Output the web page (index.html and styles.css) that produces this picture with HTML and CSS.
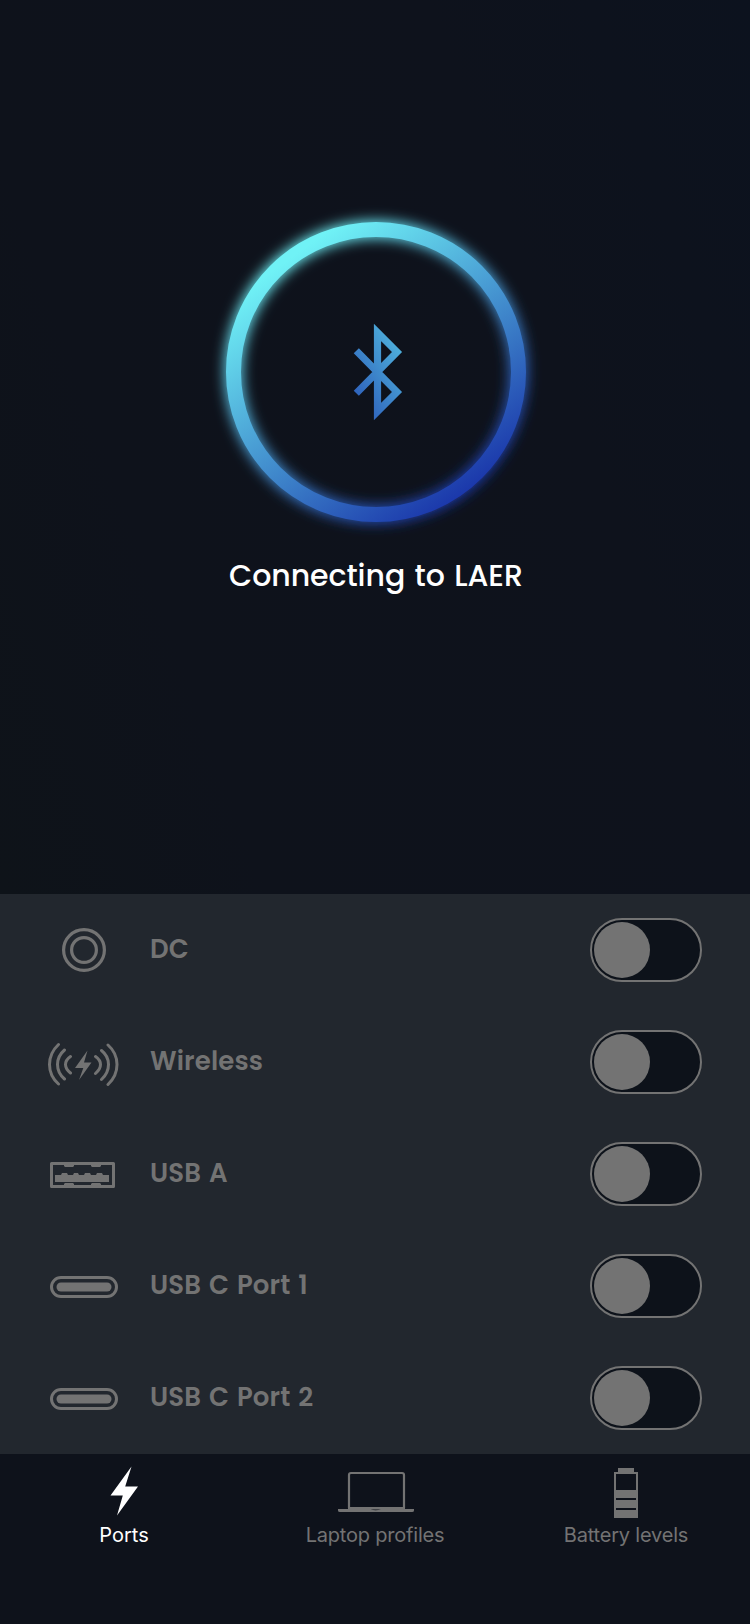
FILE: index.html
```html
<!DOCTYPE html>
<html lang="en">
<head>
<meta charset="utf-8">
<title>LAER</title>
<link rel="stylesheet" href="styles.css">
</head>
<body>
<main class="app">
  <section class="hero">
    <svg class="ring" width="350" height="350" viewBox="200 197 350 350">
      <defs>
        <linearGradient id="ringFill" gradientUnits="userSpaceOnUse" x1="293" y1="256" x2="463" y2="494">
          <stop offset="0" stop-color="#70f2f6"/><stop offset="1" stop-color="#1b38ab"/>
        </linearGradient>
        <linearGradient id="btFill" gradientUnits="userSpaceOnUse" x1="407" y1="350" x2="350" y2="384">
          <stop offset="0" stop-color="#50b4dd"/><stop offset="1" stop-color="#2f64bd"/>
        </linearGradient>
        <filter id="glow" x="-20%" y="-20%" width="140%" height="140%"><feGaussianBlur stdDeviation="6.500"/></filter>
      </defs>
      <circle cx="376" cy="372" r="142.500" fill="none" stroke="url(#ringFill)" stroke-width="18" filter="url(#glow)"/>
      <circle cx="376" cy="372" r="142.500" fill="none" stroke="url(#ringFill)" stroke-width="15"/>
      <path d="M356.300 350.800 397 392 377.500 411.500V332.500L397 352 356.300 393.200" fill="none" stroke="url(#btFill)" stroke-width="7.200" stroke-miterlimit="5"/>
    </svg>
    <h1 class="status">Connecting to LAER</h1>
  </section>

  <section class="ports">
    <div class="port">
      <svg class="port-icon" width="72" height="48" viewBox="0 0 72 48" fill="none" stroke="currentColor" stroke-width="3.200">
        <circle cx="36" cy="24" r="20.400"/><circle cx="36" cy="24" r="12.400"/>
      </svg>
      <span class="label">DC</span><span class="toggle"><i class="knob"></i></span>
    </div>
    <div class="port">
      <svg class="port-icon" width="72" height="48" viewBox="0 0 72 48" fill="none" stroke="currentColor" stroke-width="3" stroke-linecap="round">
        <path d="M10.500 6.500Q1.500 15 1.500 26.500T10.500 46M16.500 12Q9.500 18 9.500 26.500T16.500 41M22.500 18.500Q17.500 22 17.500 26.500T22.500 35M60 7Q69 15 69 26.500T60 46.500M53.500 12.500Q60.500 18 60.500 26.500T53.500 41.500M47.500 18.500Q52.500 22 52.500 26.500T47.500 35.500"/>
        <path d="M39.500 12.500 27 30h8.300L31 42 43.500 24.500h-7.500z" fill="currentColor" stroke="none"/>
      </svg>
      <span class="label">Wireless</span><span class="toggle"><i class="knob"></i></span>
    </div>
    <div class="port">
      <svg class="port-icon" width="72" height="48" viewBox="0 0 72 48">
        <path d="M3.500 13.500h62v23h-62z" fill="none" stroke="currentColor" stroke-width="3" stroke-linejoin="round"/>
        <path d="M16 14h10v2l-1 1h-8l-1-1zM43 14h10v2l-1 1h-8l-1-1zM16 36h10v-2l-1-1h-8l-1 1zM43 36h10v-2l-1-1h-8l-1 1zM7 25h6l1-2h5l1 2h5l1-2h4l1 2h5l1-2h5l1 2h5l1-2h5l1 2h6v7H7z" fill="currentColor"/>
      </svg>
      <span class="label">USB A</span><span class="toggle"><i class="knob"></i></span>
    </div>
    <div class="port">
      <svg class="port-icon" width="72" height="48" viewBox="0 0 72 48">
        <rect x="3.500" y="15.500" width="65" height="19" rx="9.500" fill="none" stroke="currentColor" stroke-width="3"/>
        <rect x="8.500" y="20.500" width="55" height="9" rx="4.500" fill="currentColor"/>
      </svg>
      <span class="label">USB C Port 1</span><span class="toggle"><i class="knob"></i></span>
    </div>
    <div class="port">
      <svg class="port-icon" width="72" height="48" viewBox="0 0 72 48">
        <rect x="3.500" y="15.500" width="65" height="19" rx="9.500" fill="none" stroke="currentColor" stroke-width="3"/>
        <rect x="8.500" y="20.500" width="55" height="9" rx="4.500" fill="currentColor"/>
      </svg>
      <span class="label">USB C Port 2</span><span class="toggle"><i class="knob"></i></span>
    </div>
  </section>

  <nav class="tabs">
    <a class="tab active">
      <svg width="80" height="56" viewBox="0 0 80 56"><path d="M47.500 2.500 26.500 31.500h12.300L33 51.500 54 22.500H41.200z" fill="currentColor"/></svg>
      <span class="tab-text">Ports</span>
    </a>
    <a class="tab">
      <svg width="80" height="56" viewBox="0 0 80 56">
        <path d="M14 44V11q0-2 2-2H67q2 0 2 2V44" fill="none" stroke="currentColor" stroke-width="2.200"/>
        <path d="M3 45h10v-2H70v2h9v1.500q0 1.500-2 1.500H5q-2 0-2-1.500zM35.500 45.500q5 1.500 10.500 0z" fill="currentColor" fill-rule="evenodd"/>
      </svg>
      <span class="tab-text tight">Laptop profiles</span>
    </a>
    <a class="tab">
      <svg width="80" height="56" viewBox="0 0 80 56"><path d="M32 4h16v4h4v46H28V8h4zM30 10v16h20V10zM30 34v2h20v-2zM30 44v2h20v-2z" fill="currentColor" fill-rule="evenodd"/></svg>
      <span class="tab-text tight">Battery levels</span>
    </a>
  </nav>
</main>
</body>
</html>
```
FILE: styles.css
```css
body {
  margin: 0;
  background: #0e121b;
  font-family: Poppins, Inter, "Open Sans", sans-serif;
}
.app {
  display: flex;
  flex-direction: column;
  height: 1624px;
  background: #0e121b;
}
.hero {
  box-sizing: border-box;
  height: 894px;
  padding-top: 197px;
  display: flex;
  flex-direction: column;
  align-items: center;
  background: linear-gradient(70deg, #0e1319 0%, #0e121b 25%, #0e121c 70%, #0c121e 100%);
}
.ring { display: block; }
.status {
  margin: 8px 0 0 2px;
  font-size: 30px;
  line-height: 42px;
  font-weight: 500;
  color: #fff;
  letter-spacing: -0.06px;
  word-spacing: 1.7px;
  white-space: nowrap;
}
.ports {
  height: 560px;
  background: #22272e;
  color: #737373;
}
.port {
  box-sizing: border-box;
  height: 112px;
  padding: 0 48px;
  display: flex;
  align-items: center;
}
.port-icon { flex: none; }
.label {
  margin-left: 30px;
  padding-bottom: 2px;
  flex: 1;
  font-size: 26px;
  line-height: 36px;
  font-weight: 600;
  letter-spacing: 0.12px;
  word-spacing: 1.6px;
  white-space: nowrap;
}
.toggle {
  box-sizing: border-box;
  width: 112px;
  height: 64px;
  padding: 2px;
  border: 2px solid #737373;
  border-radius: 32px;
  background: #0d121a;
}
.knob {
  display: block;
  width: 56px;
  height: 56px;
  border-radius: 50%;
  background: #737373;
}
.tabs {
  flex: 1;
  display: grid;
  grid-template-columns: 248px 254px 248px;
  font-family: Inter, sans-serif;
  color: #737373;
}
.tab {
  padding-top: 10px;
  display: flex;
  flex-direction: column;
  align-items: center;
}
.tab-text {
  font-size: 20px;
  line-height: 30px;
  white-space: nowrap;
}
.tight { letter-spacing: -0.2px; }
.active { color: #fff; }
```
